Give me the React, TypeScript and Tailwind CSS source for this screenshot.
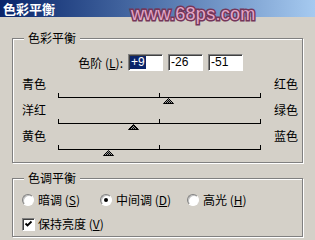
const sliders = [
  { left: "青色", right: "红色", value: 9 },
  { left: "洋红", right: "绿色", value: -26 },
  { left: "黄色", right: "蓝色", value: -51 },
];

const GroupBox = ({
  title,
  className,
  children,
}: {
  title: string;
  className: string;
  children: React.ReactNode;
}) => (
  <div
    className={`relative mx-[12px] border border-[#808080] shadow-[inset_1px_1px_0_#fff,1px_1px_0_#fff] ${className}`}
  >
    <span className="absolute left-[11px] top-[-9px] bg-[#d4d0c8] px-[4px] leading-[16px]">
      {title}
    </span>
    {children}
  </div>
);

const Track = ({ value, id }: { value: number; id: number }) => {
  const cx = 101.5 + value;
  return (
    <svg width="203" height="28" className="shrink-0 overflow-visible">
      <defs>
        <pattern id={`dither-${id}`} width="2" height="2" patternUnits="userSpaceOnUse">
          <rect width="2" height="2" fill="#9a9a9a" />
          <rect width="1" height="1" fill="#000" />
          <rect x="1" y="1" width="1" height="1" fill="#000" />
        </pattern>
      </defs>
      <line x1="0" y1="21.5" x2="203" y2="21.5" stroke="#000" />
      <line x1="0.5" y1="17" x2="0.5" y2="21" stroke="#000" />
      <line x1="101.5" y1="17" x2="101.5" y2="21" stroke="#000" />
      <line x1="202.5" y1="17" x2="202.5" y2="21" stroke="#000" />
      <polygon
        points={`${cx},22.5 ${cx + 5},27.5 ${cx - 5},27.5`}
        fill={`url(#dither-${id})`}
        stroke="#000"
        strokeWidth="1"
      />
    </svg>
  );
};

const ValueBox = ({ text, selected }: { text: string; selected?: boolean }) => (
  <div className="flex h-[17px] w-[35px] items-center border border-t-[#808080] border-l-[#808080] border-r-white border-b-white bg-white pl-[1px] font-['Liberation_Sans',sans-serif] text-[12px] leading-[13px] shadow-[inset_1px_1px_0_#404040]">
    <span className={selected ? "bg-[#0a246a] px-[1px] text-white" : "px-[1px]"}>
      {text}
    </span>
  </div>
);

const Radio = ({ checked }: { checked?: boolean }) => (
  <span className="flex h-[12px] w-[12px] shrink-0 items-center justify-center rounded-full border border-t-[#808080] border-l-[#808080] border-r-white border-b-white bg-white shadow-[inset_1px_1px_0_#c0c0c0]">
    {checked && <span className="h-[4px] w-[4px] rounded-full bg-black" />}
  </span>
);

export default function App() {
  return (
    <div className="relative h-[240px] w-[315px] overflow-hidden bg-[#d4d0c8] font-['Noto_Sans_CJK_SC',sans-serif] text-[12px] leading-[16px] text-black">
      {/* title bar */}
      <div className="flex h-[17px] items-center bg-linear-to-r from-[#0a246a] to-[#a6caf0] pl-[3px] text-[13px] font-bold leading-[17px] text-white">
        色彩平衡
      </div>

      {/* watermark */}
      <span className="absolute left-[131px] top-[5px] font-['Liberation_Sans',sans-serif] text-[18px] leading-[18px] tracking-[0.3px] text-[#e2a6c6] [-webkit-text-stroke:3px_#74375a] [paint-order:stroke_fill]">
        www.68ps.com
      </span>

      <GroupBox title="色彩平衡" className="mt-[21px] h-[125px]">
        <div className="flex items-center gap-[5px] pt-[15px]">
          <span className="w-[110px] text-right">
            色阶 (<span className="underline">L</span>):
          </span>
          <ValueBox text="+9" selected />
          <ValueBox text="-26" />
          <ValueBox text="-51" />
        </div>
        <div className="mt-[5px] flex flex-col">
          {sliders.map((s, i) => (
            <div key={s.left} className="flex h-[26px] items-start">
              <span className="w-[45px] shrink-0 pl-[9px]">{s.left}</span>
              <Track value={s.value} id={i} />
              <span className="ml-[13px]">{s.right}</span>
            </div>
          ))}
        </div>
      </GroupBox>

      <GroupBox title="色调平衡" className="mt-[15px] h-[59px]">
        <div className="flex h-[16px] items-center pl-[9px] pt-[0px] mt-[13px]">
          <div className="flex w-[78px] items-center gap-[4px]">
            <Radio />
            <span>
              暗调 (<span className="underline">S</span>)
            </span>
          </div>
          <div className="flex w-[87px] items-center gap-[4px]">
            <Radio checked />
            <span>
              中间调 (<span className="underline">D</span>)
            </span>
          </div>
          <div className="flex items-center gap-[4px]">
            <Radio />
            <span>
              高光 (<span className="underline">H</span>)
            </span>
          </div>
        </div>
        <div className="mt-[8px] flex h-[16px] items-center gap-[3px] pl-[9px]">
          <span className="flex h-[13px] w-[13px] shrink-0 items-center justify-center border border-t-[#808080] border-l-[#808080] border-r-white border-b-white bg-white shadow-[inset_1px_1px_0_#404040]">
            <svg width="9" height="9" viewBox="0 0 9 9">
              <path d="M1.5 3.5 L3.5 5.5 L7.5 1.5" fill="none" stroke="#000" strokeWidth="1.8" />
            </svg>
          </span>
          <span>
            保持亮度 (<span className="underline">V</span>)
          </span>
        </div>
      </GroupBox>
    </div>
  );
}
